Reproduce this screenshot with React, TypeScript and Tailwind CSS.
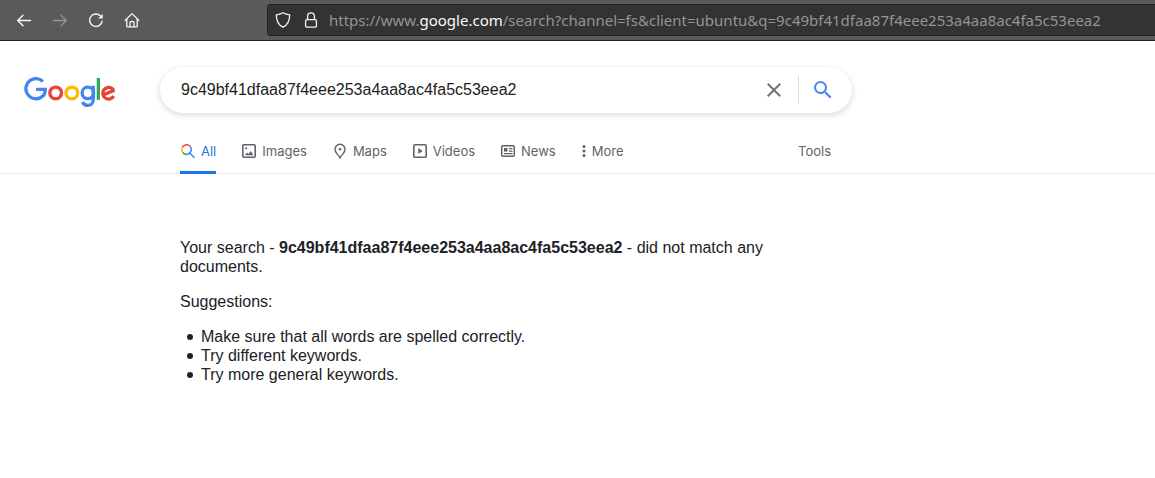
import { useState } from "react";
import type { ReactNode } from "react";

const QUERY = "9c49bf41dfaa87f4eee253a4aa8ac4fa5c53eea2";

function BrowserBar() {
  const button = "flex h-8 w-9 items-center justify-center";
  const icon = "h-4 w-4 fill-none stroke-current";
  return (
    <div className="flex h-[41px] items-center overflow-hidden border-b border-[#1f1f1f] bg-[#5a5a5a] pl-1.5 text-[#f4f4f4]">
      <button type="button" aria-label="Back" className={button}>
        <svg viewBox="0 0 16 16" className={icon} strokeWidth="1.5" strokeLinecap="round" strokeLinejoin="round">
          <path d="M14.5 8.5H1.7M7 3.2 1.7 8.5 7 13.8" />
        </svg>
      </button>
      <button type="button" aria-label="Forward" disabled className="flex h-8 w-9 items-center justify-center text-[#939393]">
        <svg viewBox="0 0 16 16" className={icon} strokeWidth="1.3" strokeLinecap="round" strokeLinejoin="round">
          <path d="M1.5 8.5h12.8M9 3.2l5.3 5.3L9 13.8" />
        </svg>
      </button>
      <button type="button" aria-label="Reload" className={button}>
        <svg viewBox="0 0 16 16" className={icon} strokeWidth="1.4" strokeLinecap="round">
          <path d="M14.2 9.2a6.3 6.3 0 1 1-1.8-5.4" />
          <path d="M14.7 1.9v4.6h-4.6z" className="fill-current" stroke="none" />
        </svg>
      </button>
      <button type="button" aria-label="Home" className={button}>
        <svg viewBox="0 0 16 16" className={icon} strokeWidth="1.3" strokeLinecap="round" strokeLinejoin="round">
          <path d="M1.2 8.2 8 1.6l6.8 6.6M2.8 7v7.2c0 .4.3.7.7.7h9c.4 0 .7-.3.7-.7V7" />
          <path d="M6 14.8v-4.1c0-.7.5-1.2 1.2-1.2h1.6c.7 0 1.2.5 1.2 1.2v4.1" />
        </svg>
      </button>
      <div className="ml-[117px] flex h-8 min-w-0 flex-1 items-center rounded-l border border-r-0 border-[#232323] bg-[#333333] pl-[7px]">
        <svg viewBox="0 0 16 16" className="h-4 w-4 shrink-0 fill-none stroke-current" strokeWidth="1.3" strokeLinejoin="round">
          <path d="M8 .8c2.2 1.2 4.3 1.8 6.7 2.1 0 5.6-1.5 9.6-6.7 12.3C2.8 12.5 1.3 8.5 1.3 2.9 3.7 2.6 5.8 2 8 .8z" />
        </svg>
        <svg viewBox="0 0 16 16" className="ml-3 h-4 w-4 shrink-0 fill-none stroke-current" strokeWidth="1.3">
          <rect x="2.6" y="7.6" width="10.8" height="7.6" rx="1.3" />
          <path d="M4.6 7.6V4.2a3.4 3.4 0 0 1 6.8 0v3.4" />
        </svg>
        <div className="ml-2.5 whitespace-nowrap font-['Noto_Sans',sans-serif] text-[15px] leading-5 text-[#949494]">
          https://www.<span className="text-[#fafafa]">google.com</span>/search?channel=fs&amp;client=ubuntu&amp;q={QUERY}
        </div>
      </div>
    </div>
  );
}

function Logo() {
  return (
    <svg viewBox="0 0 272 92" className="h-[31px] w-[92px] fill-none" strokeWidth="9.8" role="img" aria-label="Google">
      <path stroke="#4285f4" d="M55.6 13.3A29.8 29.8 0 1 0 35.3 64.6C51 64.6 62.7 54 62.7 38.5V36.7H35.3" />
      <circle stroke="#ea4335" cx="93.5" cy="47.2" r="17.4" />
      <circle stroke="#fbbc05" cx="141.5" cy="47.2" r="17.4" />
      <circle stroke="#4285f4" cx="189" cy="47.3" r="17.1" />
      <path stroke="#4285f4" d="M205.1 26.3V66c0 12-7 18.5-16.4 18.5-8 0-13-4.8-15.4-10.2" />
      <path stroke="#34a853" d="M220.2 3v65" />
      <path stroke="#ea4335" d="M265.7 56.9A17.4 17.4 0 1 1 263.3 36.2L264.2 41.1L236 52.8" />
    </svg>
  );
}

function SearchBox() {
  const [value, setValue] = useState(QUERY);
  return (
    <form
      role="search"
      onSubmit={(e) => e.preventDefault()}
      className="flex h-[46px] w-full max-w-[692px] items-center rounded-full bg-white pr-[17px] pl-[21px] shadow-[0_2px_5px_1px_rgba(64,60,67,0.16)]"
    >
      <input
        aria-label="Search"
        value={value}
        onChange={(e) => setValue(e.target.value)}
        className="min-w-0 flex-1 bg-transparent text-base text-[#212121] outline-none"
      />
      <button type="button" aria-label="Clear" onClick={() => setValue("")} className="text-[#70757a]">
        <svg viewBox="0 0 24 24" className="h-6 w-6 fill-current">
          <path d="M19 6.41 17.59 5 12 10.59 6.41 5 5 6.41 10.59 12 5 17.59 6.41 19 12 13.41 17.59 19 19 17.59 13.41 12z" />
        </svg>
      </button>
      <span className="mx-3 h-7 w-px bg-[#dadce0]" />
      <button type="submit" aria-label="Google Search" className="text-[#4285f4]">
        <svg viewBox="0 0 24 24" className="h-6 w-6 fill-current">
          <path d="M15.5 14h-.79l-.28-.27A6.471 6.471 0 0 0 16 9.5 6.5 6.5 0 1 0 9.5 16c1.61 0 3.09-.59 4.23-1.57l.27.28v.79l5 4.99L20.49 19l-4.99-5zm-6 0C7.01 14 5 11.99 5 9.5S7.01 5 9.5 5 14 7.01 14 9.5 11.99 14 9.5 14z" />
        </svg>
      </button>
    </form>
  );
}

const tabIcon = "h-4 w-4 fill-none stroke-current";

const tabs: { label: string; icon: ReactNode }[] = [
  {
    label: "Images",
    icon: (
      <svg viewBox="0 0 16 16" className={tabIcon} strokeWidth="1.6">
        <rect x="1.8" y="1.8" width="12.4" height="12.4" rx="1.2" />
        <path d="M3.8 12.2 6 9.6l1.5 1.5L9.8 8l2.6 4.2z" className="fill-current" stroke="none" />
        <circle cx="5.2" cy="5.3" r="1.1" className="fill-current" stroke="none" />
      </svg>
    ),
  },
  {
    label: "Maps",
    icon: (
      <svg viewBox="0 0 16 16" className={tabIcon} strokeWidth="1.4">
        <path d="M8 1.2a5 5 0 0 0-5 5c0 1.7.8 3 1.9 4.4C6.2 12.2 7.3 13.2 8 15c.7-1.8 1.8-2.8 3.1-4.4C12.2 9.2 13 7.9 13 6.2a5 5 0 0 0-5-5z" />
        <circle cx="8" cy="6.2" r="1.3" className="fill-current" stroke="none" />
      </svg>
    ),
  },
  {
    label: "Videos",
    icon: (
      <svg viewBox="0 0 16 16" className={tabIcon} strokeWidth="1.6">
        <rect x="1.8" y="1.8" width="12.4" height="12.4" rx="1.2" />
        <path d="M6.3 5v6l4.4-3z" className="fill-current" stroke="none" />
      </svg>
    ),
  },
  {
    label: "News",
    icon: (
      <svg viewBox="0 0 16 16" className={tabIcon} strokeWidth="1.5">
        <rect x="1.7" y="2.7" width="12.6" height="10.6" rx="1.2" />
        <path d="M4 5h3.5v3.6H4z" className="fill-current" stroke="none" />
        <path d="M9 5.6h3.5M9 8.1h3.5M4 10.6h8.5" strokeWidth="1.2" />
      </svg>
    ),
  },
];

function Tabs() {
  return (
    <nav className="flex h-[61px] items-end border-b border-[#ebebeb] pl-[180px] font-['Inter',sans-serif] text-[13px] leading-5 text-[#5f6368]">
      <div className="flex w-full max-w-[651px] items-start justify-between">
        <div className="flex h-8 shrink-0 items-start gap-[25px]">
          <a href="#all" aria-current="page" className="-mb-px flex h-[33px] items-start border-b-[3px] border-[#1a73e8] text-[#1a73e8]">
            <span className="flex items-center gap-[5px]">
              <svg viewBox="0 0 16 16" className="h-4 w-4 fill-none" strokeWidth="1.6">
                <path stroke="#ea4335" d="M2.5 4.2A4.7 4.7 0 0 1 10 3.2" />
                <path stroke="#fbbc04" d="M2.5 4.2a4.7 4.7 0 0 0 .1 5.2" />
                <path stroke="#34a853" d="M2.6 9.4a4.7 4.7 0 0 0 5.2 1.7" />
                <path stroke="#4285f4" d="M10 3.2a4.7 4.7 0 0 1-2.2 7.9M9.8 10l4.7 4.7" />
              </svg>
              All
            </span>
          </a>
          {tabs.map((tab) => (
            <a key={tab.label} href={`#${tab.label.toLowerCase()}`} className="flex items-center gap-[5px]">
              {tab.icon}
              {tab.label}
            </a>
          ))}
          <button type="button" className="flex items-center gap-[5px]">
            <svg viewBox="0 0 6 16" className="h-4 w-1.5 fill-current">
              <circle cx="3" cy="3.5" r="1.5" />
              <circle cx="3" cy="8" r="1.5" />
              <circle cx="3" cy="12.5" r="1.5" />
            </svg>
            More
          </button>
        </div>
        <button type="button">Tools</button>
      </div>
    </nav>
  );
}

const suggestions = [
  "Make sure that all words are spelled correctly.",
  "Try different keywords.",
  "Try more general keywords.",
];

export default function App() {
  return (
    <div className="min-h-screen bg-white font-['Liberation_Sans',Arial,sans-serif] text-[#202124]">
      <BrowserBar />
      <header className="flex pt-[26px] pr-6">
        <a href="#home" aria-label="Google home" className="w-40 shrink-0 pt-2.5 pl-6">
          <Logo />
        </a>
        <SearchBox />
      </header>
      <Tabs />
      <main className="px-[180px] pt-16 text-base leading-[19px]">
        <div className="flex max-w-[600px] flex-col gap-4">
          <p>
            Your search - <b>{QUERY}</b> - did not match any documents.
          </p>
          <p>Suggestions:</p>
          <ul className="pl-[7px]">
            {suggestions.map((text) => (
              <li key={text} className="flex items-center gap-2 before:h-1.5 before:w-1.5 before:rounded-full before:bg-[#202124]">
                {text}
              </li>
            ))}
          </ul>
        </div>
      </main>
    </div>
  );
}
